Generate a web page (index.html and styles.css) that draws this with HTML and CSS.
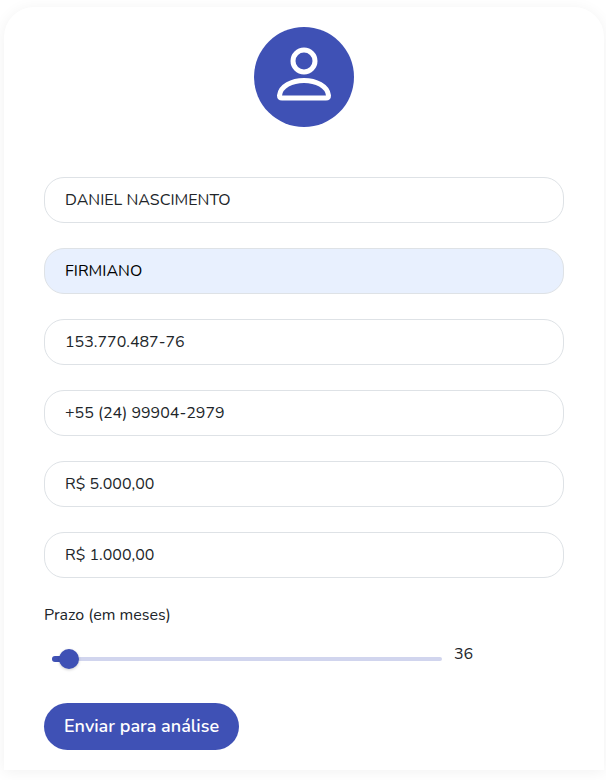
FILE: index.html
```html
<!DOCTYPE html>
<html lang="pt-BR">
<head>
<meta charset="utf-8">
<meta name="viewport" content="width=device-width, initial-scale=1">
<title>Simulação</title>
<link rel="stylesheet" href="styles.css">
</head>
<body>
<main class="card">
  <div class="avatar">
    <svg viewBox="0 0 100 100" fill="none" stroke="#fff" stroke-width="5" stroke-linejoin="round" aria-hidden="true">
      <ellipse cx="50" cy="34" rx="11" ry="11"/>
      <path d="M28 71h44q2.500 0 2.500-2.500C73.500 59 62 53.500 50 53.500S26.500 59 25.500 68.500Q25.500 71 28 71z"/>
    </svg>
  </div>
  <form class="form">
    <input class="field" type="text" aria-label="Nome" value="DANIEL NASCIMENTO">
    <input class="field field-filled" type="text" aria-label="Sobrenome" value="FIRMIANO">
    <input class="field" type="text" aria-label="CPF" value="153.770.487-76">
    <input class="field" type="tel" aria-label="Telefone" value="+55 (24) 99904-2979">
    <input class="field" type="text" aria-label="Valor" value="R$ 5.000,00">
    <input class="field" type="text" aria-label="Renda" value="R$ 1.000,00">
    <div class="term">
      <label for="prazo">Prazo (em meses)</label>
      <div class="term-row">
        <div class="slider" style="--fill: 4.35%">
          <input id="prazo" type="range" min="24" max="300" value="36">
        </div>
        <output class="term-value" for="prazo">36</output>
      </div>
    </div>
    <button class="submit" type="button">Enviar para análise</button>
  </form>
</main>
</body>
</html>
```
FILE: styles.css
```css
* {
  box-sizing: border-box;
}

body {
  margin: 0;
  padding: 7px 2px 10px 4px;
  background: #fff;
  color: #212529;
  font: 16px/24px Nunito, Lato, sans-serif;
}

.card {
  padding: 20px 40px;
  border-radius: 30px 30px 0 0;
  background: #fff;
  box-shadow: 0 2px 15px rgba(0, 0, 0, 0.06);
}

.avatar {
  width: 100px;
  height: 100px;
  margin: 0 auto 50px;
  border-radius: 50%;
  background: #3f51b5;
}

.avatar svg {
  display: block;
}

.form {
  display: flex;
  flex-direction: column;
  align-items: stretch;
  gap: 25px;
}

.field {
  width: 100%;
  height: 46px;
  padding: 0 20px;
  border: 1px solid #dee2e6;
  border-radius: 20px;
  background: #fff;
  color: inherit;
  font: inherit;
}

.field-filled {
  background: #e8f0fe;
  color: #000;
}

.term label {
  display: block;
  margin-bottom: 8px;
}

.term-row {
  display: flex;
}

.slider {
  position: relative;
  display: flex;
  flex: 0 1 75%;
  height: 48px;
  margin: 0 8px;
}

.slider::before,
.slider::after {
  content: "";
  position: absolute;
  left: 0;
  border-radius: 3px;
}

.slider::before {
  top: 22px;
  width: 100%;
  height: 4px;
  background: #d1d5ee;
}

.slider::after {
  top: 21px;
  width: var(--fill);
  height: 6px;
  background: #3f51b5;
}

.slider input {
  position: relative;
  z-index: 1;
  flex: 1;
  min-width: 0;
  margin: 0 -10px;
  appearance: none;
  background: transparent;
}

.slider input::-webkit-slider-thumb {
  appearance: none;
  width: 20px;
  height: 20px;
  border-radius: 50%;
  background: #3f51b5;
  box-shadow: 0 1px 3px rgba(0, 0, 0, 0.2);
}

.term-value {
  padding: 7px 0 0 4px;
}

.submit {
  align-self: flex-start;
  height: 47px;
  margin-top: -5px;
  padding: 0 20px;
  border: 0;
  border-radius: 24px;
  background: #3f51b5;
  color: #fff;
  font: 600 18px/27px Nunito, Lato, sans-serif;
}
```
